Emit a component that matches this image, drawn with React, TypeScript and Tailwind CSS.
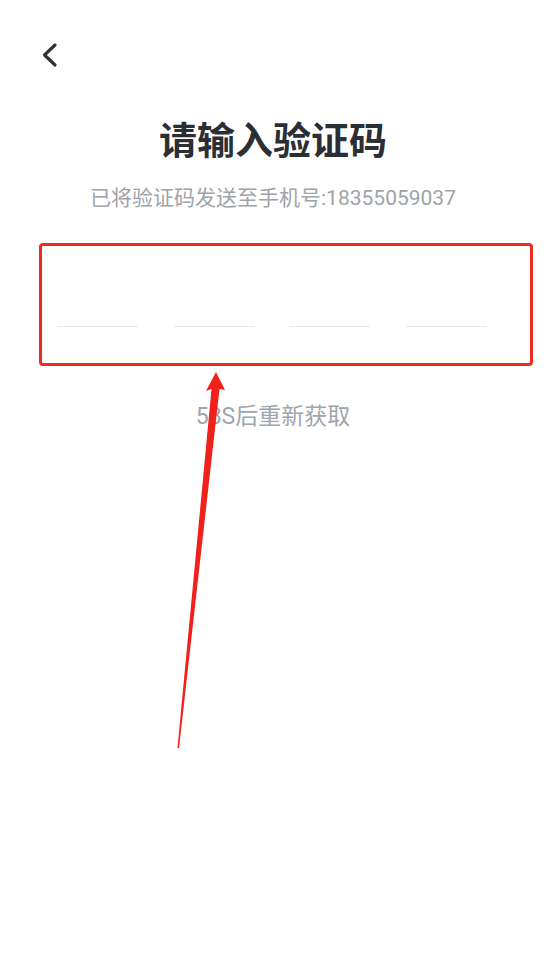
const slots = [0, 1, 2, 3];

const VerifyCodePage = () => {
  return (
    <div
      className="relative min-h-[955px] w-full bg-white"
      style={{ fontFamily: 'Roboto, "Noto Sans CJK SC", sans-serif' }}
    >
      {/* Header */}
      <div className="h-[118px] pl-[40px] pt-[42px]">
        <svg width="20" height="26" viewBox="0 0 20 26" fill="none">
          <polyline
            points="15,3 4.5,13 15,23"
            stroke="#2f3236"
            strokeWidth="3.2"
            strokeLinecap="round"
            strokeLinejoin="round"
          />
        </svg>
      </div>

      {/* Title */}
      <h1 className="text-center text-[38px] font-bold leading-[46px] text-[#2b2f33]">
        请输入验证码
      </h1>
      <p className="mt-[20px] text-center text-[21px] leading-[28px] text-[#9ea3a8]">
        已将验证码发送至手机号:18355059037
      </p>

      {/* Code inputs */}
      <div className="ml-[39px] mt-[31px] h-[123px] w-[494px] rounded-[4px] border-[3px] border-[#ee2a24]">
        <div className="flex gap-[36px] pl-[16px] pt-[80px]">
          {slots.map((i) => (
            <div key={i} className="h-px w-[80px] bg-[#e6e8ea]" />
          ))}
        </div>
      </div>

      <p className="mt-[36px] text-center text-[23px] leading-[30px] text-[#9ea5ac]">58S后重新获取</p>

      {/* Annotation arrow */}
      <svg
        className="pointer-events-none absolute left-0 top-0"
        width="546"
        height="955"
        viewBox="0 0 546 955"
      >
        <polygon
          points="216,372 225,390 219.5,389 179,748 177.5,748 211.5,389 206,391"
          fill="#f0201a"
        />
      </svg>
    </div>
  );
};

export default VerifyCodePage;
